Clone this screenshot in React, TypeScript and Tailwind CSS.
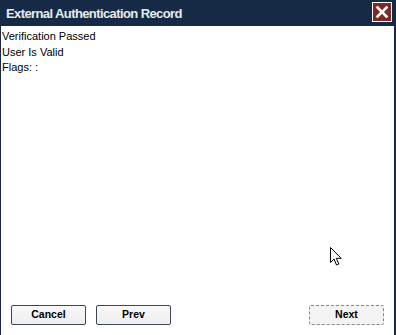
import React from "react";

export default function App() {
  return (
    <div
      className="w-[396px] h-[335px] bg-[#172a45] flex flex-col relative overflow-hidden"
      style={{ fontFamily: '"Liberation Sans", Arial, sans-serif' }}
    >
      <div className="h-[26px] flex items-center justify-between pl-[6px] pr-[3px]">
        <span className="text-[13px] font-bold text-[#e6ebf2] leading-none tracking-[-0.6px] mt-[1px]">
          External Authentication Record
        </span>
        <div className="w-[20px] h-[20px] border border-white bg-[#7b2a25] flex items-center justify-center mb-[2px] mr-[1px]">
          <svg width="14" height="14" viewBox="0 0 14 14">
            <path d="M2.5 2.5 L11.5 11.5 M11.5 2.5 L2.5 11.5" stroke="#ffffff" strokeWidth="2.6" strokeLinecap="square" />
          </svg>
        </div>
      </div>
      <div className="flex-1 bg-white ml-px mr-[2px] flex flex-col">
        <div className="pl-[1px] pt-[3px] text-[11px] text-black leading-[15px]">
          <div className="mb-px">Verification Passed</div>
          <div>User Is Valid</div>
          <div>Flags: :</div>
        </div>
        <div className="flex-1" />
        <div className="flex items-center pl-[10px] pr-[10px] pb-[10px]">
          <button className="w-[75px] h-[20px] border border-[#3c4656] rounded-[2px] bg-gradient-to-b from-[#f8f8f8] to-[#eeeeee] text-[10.5px] font-bold text-black">
            Cancel
          </button>
          <button className="ml-[10px] w-[75px] h-[20px] border border-[#3c4656] rounded-[2px] bg-gradient-to-b from-[#f8f8f8] to-[#eeeeee] text-[10.5px] font-bold text-black">
            Prev
          </button>
          <div className="flex-1" />
          <button className="w-[75px] h-[20px] border border-dashed border-[#888888] rounded-[2px] bg-[#f3f3f3] text-[10.5px] font-bold text-black">
            Next
          </button>
        </div>
      </div>
      <svg className="absolute left-[330px] top-[247px]" width="14" height="20" viewBox="0 0 14 20">
        <path
          d="M0.5 0.5 L0.5 15.5 L4 12 L6.5 18 L8.8 17 L6.3 11.3 L11.2 11.3 Z"
          fill="#ffffff"
          stroke="#000000"
          strokeWidth="1"
          strokeLinejoin="round"
        />
      </svg>
    </div>
  );
}
